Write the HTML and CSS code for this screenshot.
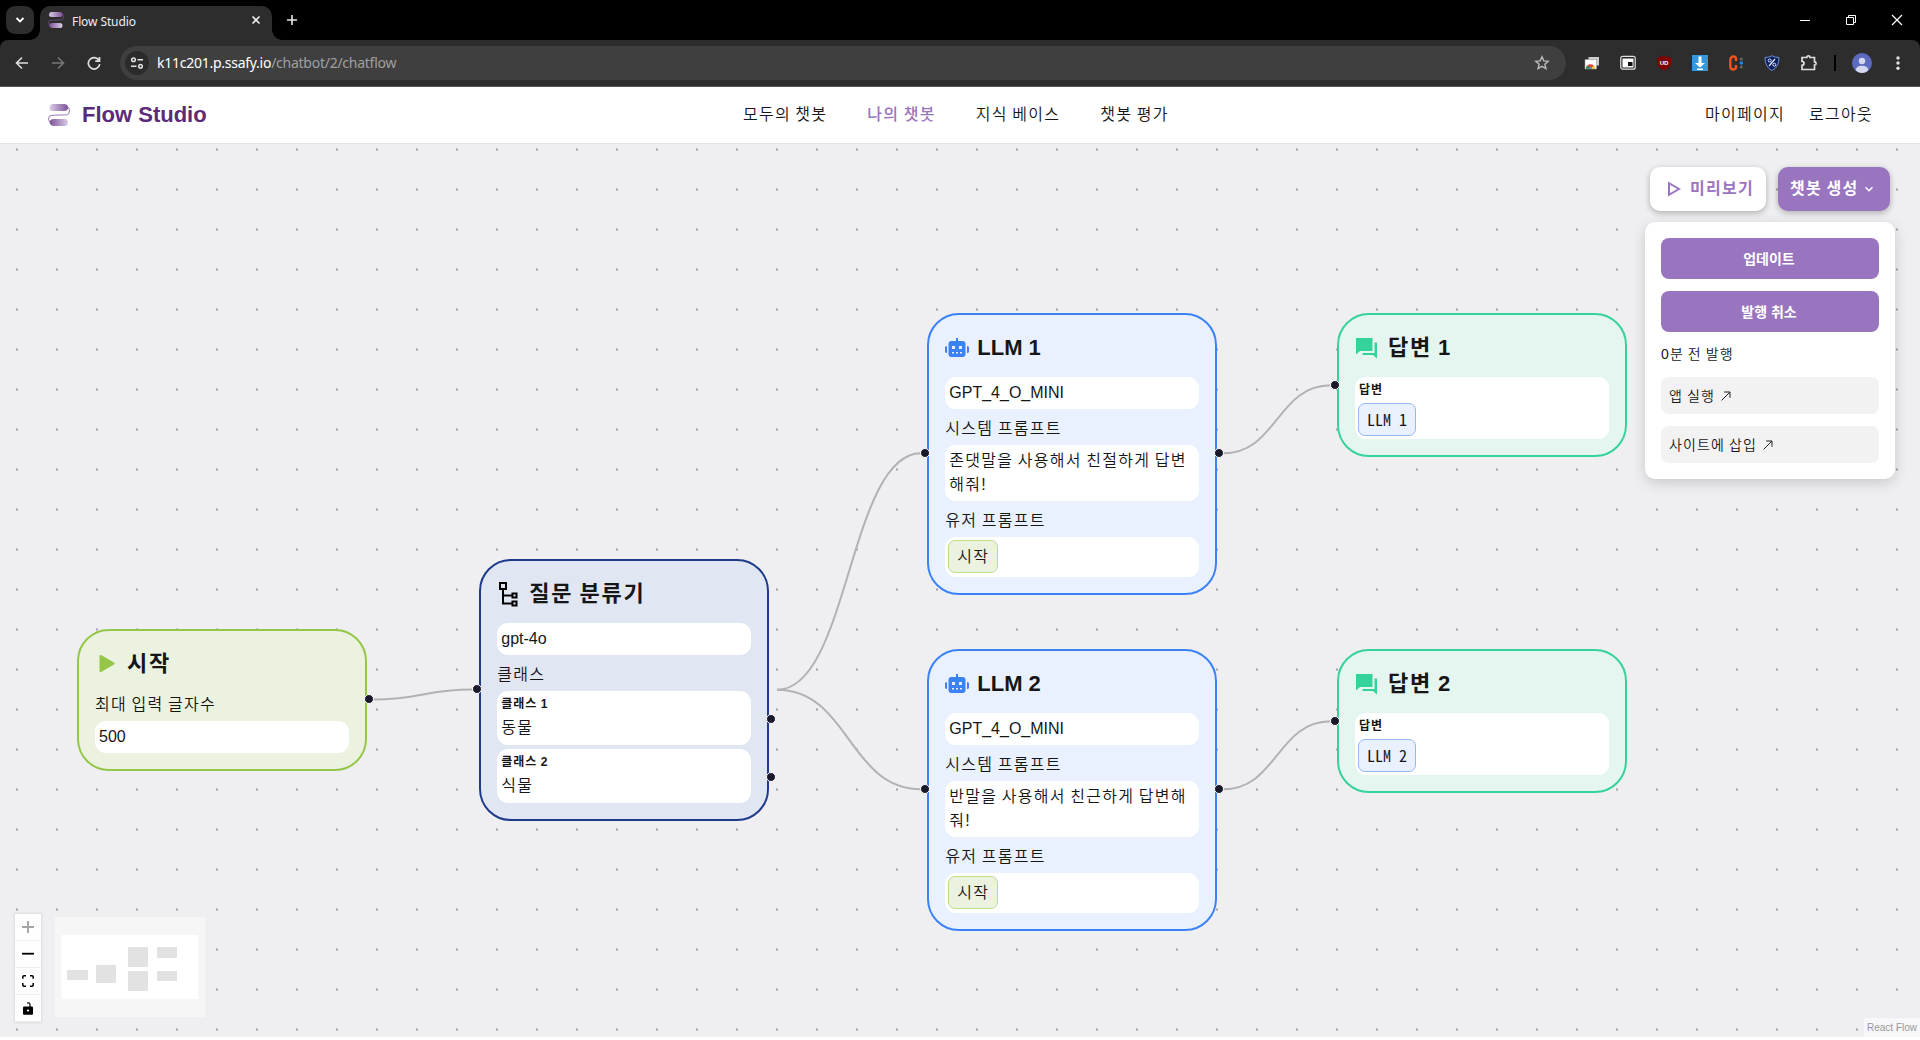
FILE: index.html
```html
<!DOCTYPE html>
<html lang="ko">
<head>
<meta charset="utf-8">
<title>Flow Studio</title>
<link rel="stylesheet" href="styles.css">
</head>
<body>
<svg width="0" height="0" class="defs">
  <defs>
    <linearGradient id="logo-a" x1="0" x2="1"><stop offset="0" stop-color="#d9cde6"/><stop offset="1" stop-color="#7d5299"/></linearGradient>
    <linearGradient id="logo-b" x1="0" x2="1"><stop offset="0" stop-color="#7d5299"/><stop offset="1" stop-color="#d9cde6"/></linearGradient>
    <symbol id="logo" viewBox="0 0 22 22">
      <path d="M5 0h11q4 0 4 3.500t-4 3.500H4.500Q1.500 7 1.500 4.500 1.500 0 5 0z" fill="url(#logo-a)"/>
      <path d="M6 15h11q3 0 3 3.500T16.500 22H6q-4 0-4.500-4Q2 15 6 15z" fill="url(#logo-b)"/>
      <path d="M19 2q2.500 1.500 2.500 5 0 3.500-3 3.800L4 11.300Q.5 11.500.5 15q0 2 2.500 4" fill="none" stroke="#83599f" stroke-width=".8"/>
    </symbol>
    <symbol id="robot" viewBox="0 0 24 20">
      <path d="M11 0h2v3h4.500a3 3 0 0 1 3 3v10a3 3 0 0 1-3 3h-11a3 3 0 0 1-3-3V6a3 3 0 0 1 3-3H11zM0 9.500Q0 8 2 8v7Q0 15 0 13.500zM22 8q2 0 2 1.500v4Q24 15 22 15z" fill="#3b82f6"/>
      <path d="M7 8h3v3H7zM14 8h3v3h-3zM7 14h2v1.500H7zM11 14h2v1.500h-2zM15 14h2v1.500h-2z" fill="#eaf1fe"/>
    </symbol>
    <symbol id="chat" viewBox="0 0 22 22">
      <path d="M1 1h16.500v13H5l-4 3.500zM19.500 5.500H22v16L18 18H7.500v-2h12z" fill="#34d399"/>
    </symbol>
    <symbol id="arrow" viewBox="0 0 10 10"><path d="M.6 9.400 9 1M3.200 1H9v5.800" fill="none" stroke="#222" stroke-width="1"/></symbol>
  </defs>
</svg>

<div class="browser">
  <div class="tabs">
    <button class="tab-search"><svg width="10" height="10" viewBox="0 0 10 10"><path d="M1.500 3 5 6.500 8.500 3" fill="none" stroke="#fff" stroke-width="1.800"/></svg></button>
    <div class="tab">
      <svg class="favicon" width="16" height="16"><use href="#logo"/></svg>
      <span class="tab-title">Flow Studio</span>
      <svg width="10" height="10" viewBox="0 0 10 10"><path d="M1.500 1.500l7 7M8.500 1.500l-7 7" stroke="#eee" stroke-width="1.600"/></svg>
    </div>
    <svg class="new-tab" width="12" height="12" viewBox="0 0 12 12"><path d="M6 1v10M1 6h10" stroke="#e8e8e8" stroke-width="1.600"/></svg>
    <div class="win">
      <svg width="12" height="12" viewBox="0 0 12 12"><path d="M1 6.500h10" stroke="#fff"/></svg>
      <svg width="12" height="12" viewBox="0 0 12 12"><path d="M1.500 3.500h7v7h-7zM3.500 3.500v-2h7v7h-2" fill="none" stroke="#fff"/></svg>
      <svg width="12" height="12" viewBox="0 0 12 12"><path d="M1 1l10 10M11 1 1 11" stroke="#fff" stroke-width="1.200"/></svg>
    </div>
  </div>
  <div class="toolbar">
    <div class="nav-icons">
      <svg width="14" height="14" viewBox="0 0 14 14"><path d="M13 7H2M7 1.500 1.500 7 7 12.500" fill="none" stroke="#ddd" stroke-width="1.600"/></svg>
      <svg width="14" height="14" viewBox="0 0 14 14"><path d="M1 7h11M7 1.500 12.500 7 7 12.500" fill="none" stroke="#777" stroke-width="1.600"/></svg>
      <svg width="14" height="14" viewBox="0 0 14 14"><path d="M12 4.500A5.700 5.700 0 1 0 12.700 8M12.500 1v4.200H8.300" fill="none" stroke="#ddd" stroke-width="1.700"/></svg>
    </div>
    <div class="address">
      <span class="site-info"><svg width="14" height="14" viewBox="0 0 14 14" fill="none" stroke="#e3e3e3" stroke-width="1.500"><circle cx="3.500" cy="3.800" r="1.800"/><path d="M7.500 3.800H13M1 10.300h5.500"/><circle cx="10.500" cy="10.300" r="1.800"/></svg></span>
      <span class="url">k11c201.p.ssafy.io<span class="path">/chatbot/2/chatflow</span></span>
      <svg class="star" width="16" height="16" viewBox="0 0 16 16"><path d="M8 1.800l1.800 4.100 4.400.4-3.300 2.900 1 4.400L8 11.300l-3.900 2.300 1-4.400L1.800 6.300l4.400-.4z" fill="none" stroke="#bbb" stroke-width="1.400"/></svg>
    </div>
    <div class="extensions">
      <svg width="16" height="16" viewBox="0 0 16 16"><path d="M4.500 2h10.500v8.500H4.500z" fill="#ccc"/><path d="M1 4.500h11.500V14H1z" fill="#fff" stroke="#999" stroke-width=".6"/><path d="M2 13.700a4.500 4.500 0 0 1 9 0z" fill="#db4437"/><path d="M2 13.700a4.500 4.500 0 0 1 1.300-3.200l3.200 3.200z" fill="#0f9d58"/><path d="M9.700 10.500a4.500 4.500 0 0 1 1.300 3.200H6.500z" fill="#ffcd40"/><path d="M4.800 13.700a1.700 1.700 0 0 1 3.400 0z" fill="#4285f4"/></svg>
      <svg width="16" height="16" viewBox="0 0 16 16"><rect x=".8" y="1.300" width="14.400" height="12.900" rx="2" fill="#222" stroke="#e3e3e3" stroke-width="1.200"/><path d="M2.500 3.500h11v9h-11z" fill="#fff"/><path d="M8 7h4.500v4H8z" fill="#111"/></svg>
      <svg width="16" height="16" viewBox="0 0 16 16"><path d="M8 .5 15 3v5q-.5 5-7 7.500Q1.500 13 1 8V3z" fill="#800000"/><text x="8" y="9.500" text-anchor="middle" class="ub">UD</text></svg>
      <svg width="16" height="16" viewBox="0 0 16 16"><path d="M0 0h16v16H0z" fill="#3498db"/><path d="M6.500 1.500h3V8H13l-5 4.500L3 8h3.500zM5 13.500h6V15H5z" fill="#fff"/></svg>
      <svg width="16" height="16" viewBox="0 0 16 16"><path d="M8 6V4.500Q8 1.500 5.300 1.500T2.300 5v6q0 3.500 3 3.500T8 11.500V10" fill="none" stroke="#f4511e" stroke-width="2.400"/><circle cx="13.300" cy="4" r="1.500" fill="#666"/><circle cx="13.300" cy="8" r="1.800" fill="#1e88e5"/><circle cx="13.300" cy="12" r="1.500" fill="#666"/></svg>
      <svg width="16" height="16" viewBox="0 0 16 16"><path d="M8 .8Q11 2.500 15 2.500 15 12 8 15.500 1 12 1 2.500 5 2.500 8 .8z" fill="#0b1f5c" stroke="#6d8fd6" stroke-width="1"/><path d="M11 4 5 11" stroke="#dde6ff" stroke-width="1.200"/><circle cx="5.700" cy="5.500" r="1.500" fill="none" stroke="#dde6ff"/><circle cx="10.300" cy="9.700" r="1.500" fill="none" stroke="#dde6ff"/></svg>
      <svg width="18" height="18" viewBox="0 0 18 18"><path d="M2 3.500h4.800a1.600 1.600 0 0 1 3.200 0h4.500v4.300a1.600 1.600 0 0 1 0 3.200v4.500H2v-4.200a2 2 0 0 0 0-4z" fill="none" stroke="#ddd" stroke-width="1.700"/></svg>
      <span class="sep"></span>
      <svg class="avatar" width="20" height="20" viewBox="0 0 20 20"><circle cx="10" cy="10" r="10" fill="#5c6bc0"/><circle cx="10" cy="8" r="3.200" fill="#d5d9f0"/><path d="M3.500 17q1-4.300 6.500-4.300t6.500 4.300q-2.500 3-6.500 3t-6.500-3z" fill="#d5d9f0"/></svg>
      <svg class="more" width="4" height="16" viewBox="0 0 4 16" fill="#e3e3e3"><circle cx="2" cy="3" r="1.700"/><circle cx="2" cy="8" r="1.700"/><circle cx="2" cy="13.300" r="1.700"/></svg>
    </div>
  </div>
</div>

<header class="site">
  <div class="brand"><svg width="22" height="22"><use href="#logo"/></svg><span>Flow Studio</span></div>
  <nav class="menu ko">
    <a>모두의 챗봇</a><a class="active">나의 챗봇</a><a>지식 베이스</a><a>챗봇 평가</a>
  </nav>
  <div class="account ko"><a>마이페이지</a><a>로그아웃</a></div>
</header>

<main class="flow">
  <svg class="edges" width="1920" height="893" viewBox="0 144 1920 893">
    <defs><pattern id="dots" x="-3" y="129.500" width="40" height="40" patternUnits="userSpaceOnUse"><rect x="19" y="19" width="2" height="2" fill="#a0a0a5"/></pattern></defs>
    <rect y="144" width="1920" height="893" fill="url(#dots)"/>
    <g fill="none" stroke="#b1b1b7" stroke-width="2">
      <path d="M373 699.500C423 699.500 423 689.500 473 689.500"/>
      <path d="M777 689.800C849 689.800 849 453.300 921 453.300"/>
      <path d="M777 689.800C849 689.800 849 789.300 921 789.300"/>
      <path d="M1223 453.300C1277 453.300 1277 385.300 1331 385.300"/>
      <path d="M1223 789.300C1277 789.300 1277 721.300 1331 721.300"/>
    </g>
  </svg>

  <section class="node start" style="left:77px;top:485.300px">
    <h2><svg width="24" height="24" viewBox="0 0 24 24"><path d="M4.500 4.500q0-2 2-1.200L19 10.600q1.400.9 0 1.800L6.500 19.800q-2 1-2-1z" fill="#95c648"/></svg><span class="ko">시작</span></h2>
    <p class="label ko">최대 입력 글자수</p>
    <div class="field">500</div>
    <i class="handle right" style="top:68px"></i>
  </section>

  <section class="node classifier" style="left:479.300px;top:415.300px">
    <h2><svg width="24" height="26" viewBox="0 0 24 26" fill="none" stroke="#000" stroke-width="2"><path d="M3 2h6v6H3zM6 8v14.500h9M6 14.500h9M15.500 12.500h4v4h-4zM15.500 20.500h4v4h-4z"/></svg><span class="ko">질문 분류기</span></h2>
    <div class="field">gpt-4o</div>
    <p class="label ko">클래스</p>
    <div class="field class-item"><b class="ko">클래스 1</b><span class="ko">동물</span></div>
    <div class="field class-item"><b class="ko">클래스 2</b><span class="ko">식물</span></div>
    <i class="handle left" style="top:128px"></i>
    <i class="handle right" style="top:158px"></i>
    <i class="handle right" style="top:216px"></i>
  </section>

  <section class="node llm" style="left:927.300px;top:169.300px">
    <h2><svg width="24" height="20"><use href="#robot"/></svg><span>LLM 1</span></h2>
    <div class="field">GPT_4_O_MINI</div>
    <p class="label ko">시스템 프롬프트</p>
    <div class="field ko">존댓말을 사용해서 친절하게 답변<br>해줘!</div>
    <p class="label ko">유저 프롬프트</p>
    <div class="field chips"><span class="chip green ko">시작</span></div>
    <i class="handle left" style="top:138px"></i>
    <i class="handle right" style="top:138px"></i>
  </section>

  <section class="node llm" style="left:927.300px;top:505.300px">
    <h2><svg width="24" height="20"><use href="#robot"/></svg><span>LLM 2</span></h2>
    <div class="field">GPT_4_O_MINI</div>
    <p class="label ko">시스템 프롬프트</p>
    <div class="field ko">반말을 사용해서 친근하게 답변해<br>줘!</div>
    <p class="label ko">유저 프롬프트</p>
    <div class="field chips"><span class="chip green ko">시작</span></div>
    <i class="handle left" style="top:138px"></i>
    <i class="handle right" style="top:138px"></i>
  </section>

  <section class="node answer" style="left:1337px;top:169.300px">
    <h2><svg width="22" height="22"><use href="#chat"/></svg><span class="ko">답변 1</span></h2>
    <div class="field answer-item"><b class="ko">답변</b><span class="chip blue">LLM 1</span></div>
    <i class="handle left" style="top:70px"></i>
  </section>

  <section class="node answer" style="left:1337px;top:505.300px">
    <h2><svg width="22" height="22"><use href="#chat"/></svg><span class="ko">답변 2</span></h2>
    <div class="field answer-item"><b class="ko">답변</b><span class="chip blue">LLM 2</span></div>
    <i class="handle left" style="top:70px"></i>
  </section>

  <aside class="publish">
    <div class="actions">
      <button class="preview ko"><svg width="14" height="16" viewBox="0 0 14 16"><path d="M2 2.200v11.600L12 8z" fill="none" stroke="#9a75bf" stroke-width="2"/></svg>미리보기</button>
      <button class="create ko">챗봇 생성<svg width="10" height="10" viewBox="0 0 10 10"><path d="M1.500 3.200 5 6.700l3.500-3.500" fill="none" stroke="#fff" stroke-width="1.500"/></svg></button>
    </div>
    <div class="panel ko">
      <button class="primary">업데이트</button>
      <button class="primary">발행 취소</button>
      <p>0분 전 발행</p>
      <a class="link">앱 실행<svg width="10" height="10"><use href="#arrow"/></svg></a>
      <a class="link">사이트에 삽입<svg width="10" height="10"><use href="#arrow"/></svg></a>
    </div>
  </aside>

  <div class="controls">
    <button><svg width="12" height="12" viewBox="0 0 12 12"><path d="M6 0v12M0 6h12" stroke="#a5a5a5" stroke-width="1.900"/></svg></button>
    <button><svg width="12" height="12" viewBox="0 0 12 12"><path d="M0 5.700h12" stroke="#000" stroke-width="1.800"/></svg></button>
    <button><svg width="12" height="12" viewBox="0 0 12 12"><path d="M.8 3.800V2Q.8.800 2 .8h2M8 .8h2q1.200 0 1.200 1.200v1.800M11.200 8v2q0 1.200-1.200 1.200H8M4 11.200H2Q.8 11.200.8 10V8" fill="none" stroke="#000" stroke-width="1.500"/></svg></button>
    <button><svg width="12" height="13" viewBox="0 0 12 13"><path d="M5 1q3-.8 3 1.800V5" fill="none" stroke="#000" stroke-width="1.200"/><path d="M2 4.600h8q1 0 1 1V12q0 .8-1 .8H2q-1 0-1-.8V5.600q0-1 1-1z"/><circle cx="6" cy="8.500" r="1.100" fill="#fff"/></svg></button>
  </div>

  <svg class="minimap" width="150" height="100" viewBox="0 0 150 100">
    <rect width="150" height="100" fill="#f6f6f6"/>
    <rect x="6.700" y="18" width="136.300" height="64" fill="#fff"/>
    <g fill="#e2e2e2"><rect x="12" y="53" width="21" height="10"/><rect x="41" y="48" width="20" height="18"/><rect x="73" y="30" width="20" height="20"/><rect x="73" y="54" width="20" height="20"/><rect x="102" y="30" width="20" height="11"/><rect x="102" y="54" width="20" height="10"/></g>
  </svg>
  <div class="attribution">React Flow</div>
</main>
</body>
</html>
```
FILE: styles.css
```css
* { box-sizing: border-box; }
body { margin: 0; width: 1920px; height: 1040px; overflow: hidden; background: #fff; color: #161616; font: 16px/24px "Liberation Sans", "Noto Sans CJK KR", sans-serif; }
h2, p { margin: 0; }
button { border: 0; padding: 0; background: none; font: inherit; color: inherit; }
svg { display: block; flex: none; }
.defs { position: absolute; }
.ko { letter-spacing: .08em; word-spacing: -.08em; }
.menu, .account, .label, .field, .panel { font-weight: 350; }

.browser { height: 87px; background: #000; border-bottom: 1px solid #555; font-family: "Noto Sans", "Liberation Sans", sans-serif; }
.tabs { height: 40px; display: flex; align-items: flex-start; }
.tab-search { width: 28px; height: 28px; margin: 6px 0 0 6px; border-radius: 9px; background: #2d2d2d; display: grid; place-items: center; }
.tab { position: relative; width: 232px; height: 34px; margin: 6px 0 0 6px; padding: 0 11px 6px 8px; background: #2d2d2d; border-radius: 10px 10px 0 0; display: flex; align-items: center; }
.tab::before, .tab::after { content: ""; position: absolute; bottom: 0; width: 10px; height: 10px; }
.tab::before { left: -10px; background: radial-gradient(circle at 0 0, transparent 9.500px, #2d2d2d 10px); }
.tab::after { right: -10px; background: radial-gradient(circle at 100% 0, transparent 9.500px, #2d2d2d 10px); }
.tab-title { flex: 1; margin: 3px 0 0 8px; color: #eee; font-size: 12px; letter-spacing: -.1px; }
.new-tab { margin: 14px 0 0 14px; }
.win { margin: 14px 17px 0 auto; display: flex; gap: 34px; }
.toolbar { height: 46px; background: #2d2d2d; border-radius: 8px 8px 0 0; display: flex; align-items: center; padding: 0 20px 0 15px; }
.nav-icons { display: flex; gap: 22px; width: 105px; }
.address { width: 1446px; height: 34px; border-radius: 17px; background: #3f3f3f; display: flex; align-items: center; padding: 0 16px 0 5px; }
.site-info { width: 24px; height: 24px; border-radius: 50%; background: #2b2b2b; display: grid; place-items: center; }
.url { flex: 1; margin-left: 8px; color: #fff; font-size: 14px; letter-spacing: -.26px; }
.path { color: #a0a0a0; }
.extensions { flex: 1; display: flex; align-items: center; gap: 20px; margin-left: 18px; }
.sep { width: 2px; height: 16px; background: #000; margin-left: -4px; }
.avatar { margin-left: -4px; }
.more { margin-left: auto; }
.ub { font: bold 6px "Liberation Sans", sans-serif; fill: #fff; }

.site { height: 57px; border-bottom: 1px solid #e2e2e5; display: flex; align-items: center; justify-content: space-between; padding: 0 47px 0 48px; }
.brand { display: flex; align-items: center; gap: 12px; color: #5c2a7a; font-size: 22px; font-weight: bold; }
.menu { display: flex; gap: 40px; }
.menu .active { color: #9a75bf; font-weight: 500; }
.account { display: flex; gap: 24px; justify-content: flex-end; }

.flow { position: relative; height: 893px; background: #efeff2; overflow: hidden; }
.edges { position: absolute; inset: 0; }
.node { position: absolute; width: 290px; padding: 16px; border: 2px solid; border-radius: 32px; }
.start { border-color: #95c648; background: #ebf2e0; }
.classifier { border-color: #1e3a8a; background: #e0e6f2; }
.llm { border-color: #3b82f6; background: #eaf1fe; }
.answer { border-color: #34d399; background: #e5f6f0; }
.node h2 { height: 33px; margin-bottom: 13px; display: flex; align-items: center; gap: 8px; font-size: 22px; line-height: 33px; }
.answer h2 { gap: 11px; }
.label { height: 24px; margin-bottom: 4px; }
.field { width: 254px; min-height: 32px; padding: 4px; border-radius: 11px; background: #fff; line-height: 24px; }
.field + .label { margin-top: 8px; }
.class-item { height: 54px; display: flex; flex-direction: column; gap: 3px; }
.class-item + .class-item { margin-top: 4px; }
.field b { display: block; font-size: 12px; font-weight: bold; line-height: 18px; }
.chips { height: 40px; padding: 3px; }
.answer-item { height: 62px; padding: 3px; }
.answer-item b { margin: 1px 0 4px 1px; }
.chip { display: block; width: fit-content; height: 33px; padding: 0 8px; border: 1px solid; border-radius: 7px; line-height: 32px; }
.green { border-color: #bedc8e; background: #ebf2e0; }
.blue { border-color: #93b8fa; background: #eaf1fe; font-family: "Noto Sans Mono CJK KR", "Liberation Mono", monospace; line-height: 30px; }
.handle { position: absolute; width: 10px; height: 10px; margin-top: -5px; border: 1px solid #fff; border-radius: 50%; background: #1a192b; }
.left { left: -9px; }
.right { right: -9px; }

.publish { position: absolute; left: 1645px; top: 23px; width: 250px; }
.actions { display: flex; gap: 12px; padding-left: 5px; height: 44px; }
.actions button { display: flex; align-items: center; border-radius: 10px; font-weight: bold; box-shadow: 0 2px 6px rgba(0,0,0,.28); }
.preview { width: 116px; padding-left: 17px; gap: 9px; background: #fff; color: #9a75bf; }
.create { width: 112px; padding-left: 12px; gap: 6px; background: #9a75bf; color: #fff; }
.panel { margin-top: 11px; height: 257px; padding: 16px; border-radius: 10px; background: #fff; box-shadow: 0 4px 14px rgba(0,0,0,.16); display: flex; flex-direction: column; font-size: 14px; }
.panel > * { flex: none; }
.primary { height: 41px; margin-bottom: 12px; padding-right: 2px; border-radius: 8px; background: #9a75bf; color: #fff; font-weight: bold; }
.panel p { height: 20px; line-height: 20px; margin-bottom: 13px; }
.link { height: 37px; margin-bottom: 12px; padding: 0 8px; border-radius: 8px; background: #f2f2f2; display: flex; align-items: center; gap: 6px; }

.controls { position: absolute; left: 15px; bottom: 15px; width: 26px; box-shadow: 0 0 2px 1px rgba(0,0,0,.08); }
.controls button { width: 26px; height: 27px; background: #fefefe; border-bottom: 1px solid #eee; display: grid; place-items: center; }
.minimap { position: absolute; left: 55px; top: 773px; }
.attribution { position: absolute; right: 0; bottom: 0; padding: 4px 3px 3px; background: rgba(255,255,255,.5); color: #999; font-size: 10px; line-height: 12px; }
```
